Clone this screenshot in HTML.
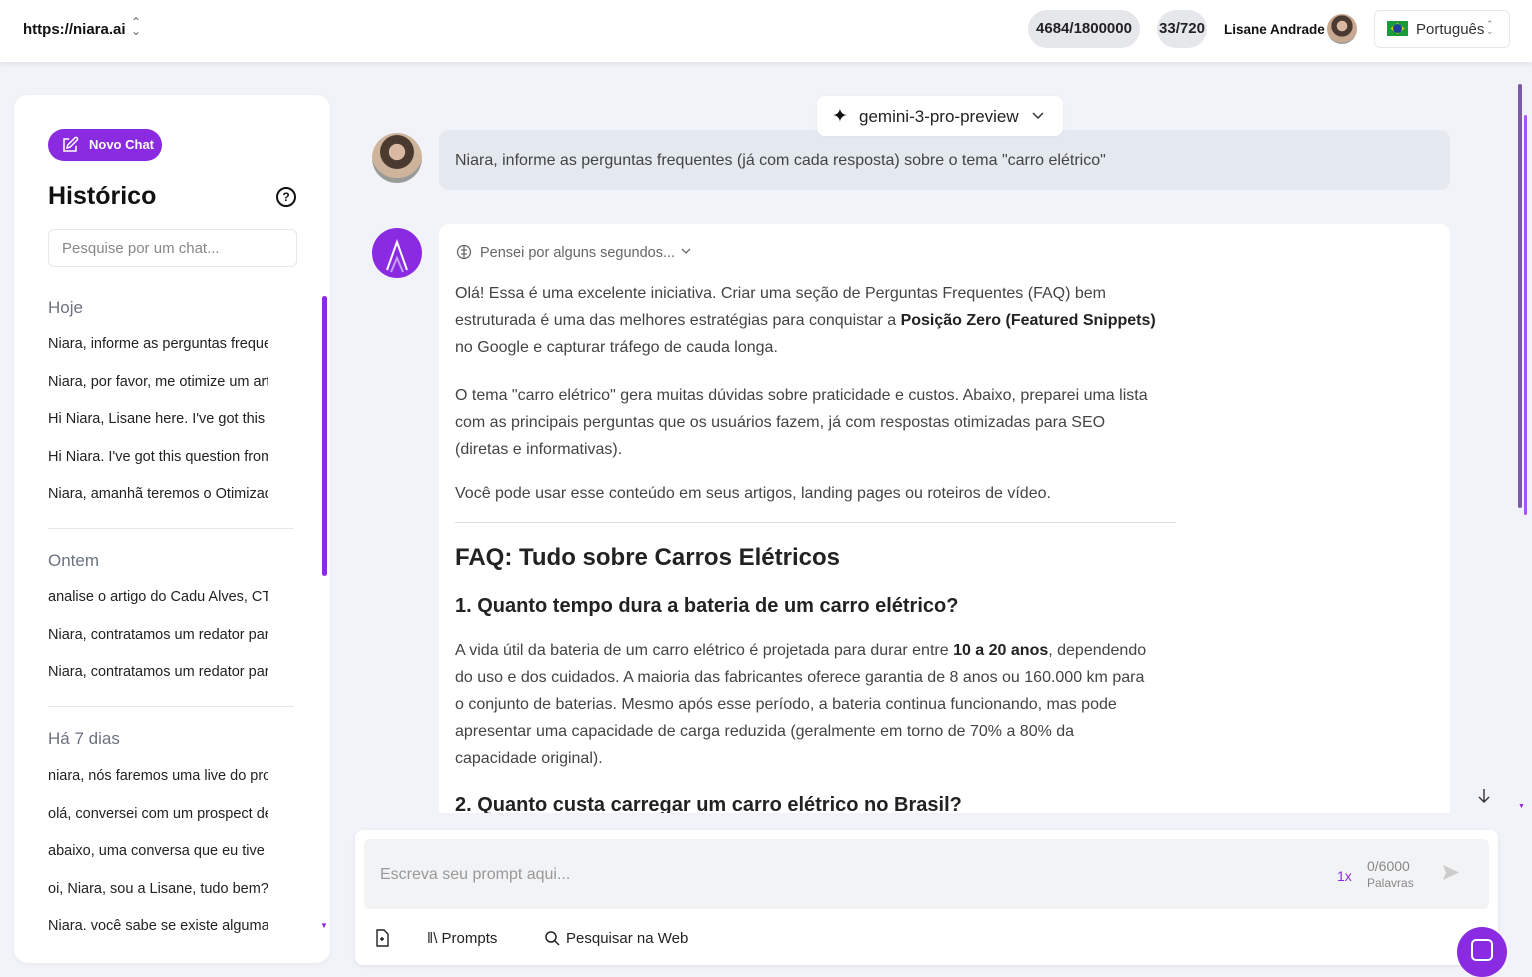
<!DOCTYPE html>
<html><head><meta charset="utf-8"><style>
*{box-sizing:border-box;margin:0;padding:0}
body{width:1532px;height:975px;overflow:hidden;background:#f1f3f8;font-family:"Liberation Sans",sans-serif;color:#111;position:relative}
.hdr{position:absolute;left:0;top:0;width:1532px;height:62px;background:#fff;box-shadow:0 2px 6px rgba(0,0,0,.08);z-index:5}
.abs{position:absolute}
.pill{position:absolute;background:#e5e7eb;border-radius:20px;height:38px;top:10px;font-size:15px;font-weight:bold;line-height:38px;text-align:center;color:#222}
.side{position:absolute;left:14px;top:95px;width:316px;height:868px;background:#fff;border-radius:14px;box-shadow:0 1px 4px rgba(0,0,0,.05);overflow:hidden}
.it{position:absolute;left:34px;width:220px;white-space:nowrap;overflow:hidden;font-size:14.5px;color:#222}
.sh{position:absolute;left:34px;font-size:17px;color:#6b7280}
.dv{position:absolute;left:34px;width:246px;height:1px;background:#e5e7eb}
.t{position:absolute;left:455px;white-space:nowrap;font-size:16px;color:#444}
.t b{color:#222}
</style></head><body>
<div class="hdr">
 <div class="abs" style="left:23px;top:21px;font-size:15px;font-weight:bold">https://niara.ai</div>
 <div class="abs" style="left:131px;top:18px;font-size:12px;color:#666;line-height:9px">&#8963;<br>&#8964;</div>
 <div class="pill" style="left:1028px;width:112px">4684/1800000</div>
 <div class="pill" style="left:1157px;width:50px">33/720</div>
 <div class="abs" style="left:1224px;top:22px;font-size:13.5px;font-weight:bold">Lisane Andrade</div>
 <div class="abs" style="left:1327px;top:14px;width:30px;height:30px;border-radius:50%;background:radial-gradient(circle at 50% 40%,#d8b8a0 0 22%,#4a3a32 23% 45%,#c8a890 46% 70%,#999 71%)"></div>
 <div class="abs" style="left:1374px;top:10px;width:136px;height:38px;border:1px solid #e5e7eb;border-radius:6px;background:#fff"></div>
 <div class="abs" style="left:1387px;top:21px;width:21px;height:15px;background:#1a9a3a"><div style="margin:2px auto;width:14px;height:11px;background:#f5d000;clip-path:polygon(50% 0,100% 50%,50% 100%,0 50%)"></div></div>
 <div class="abs" style="left:1393px;top:24px;width:9px;height:9px;border-radius:50%;background:#1f3f9a"></div>
 <div class="abs" style="left:1416px;top:21px;font-size:15px;color:#333">Português</div>
 <div class="abs" style="left:1486px;top:21px;font-size:9px;color:#888;line-height:7px">&#8963;<br>&#8964;</div>
</div>
<div class="abs" style="left:1518px;top:84px;width:4px;height:424px;background:#7b5aa6;border-radius:2px"></div>
<div class="abs" style="left:1524px;top:115px;width:3px;height:400px;background:#a855f7;border-radius:2px"></div>

<div class="side">
 <div class="abs" style="left:34px;top:34px;width:114px;height:32px;border-radius:16px;background:#8a2be2;color:#fff;font-size:13px;font-weight:bold;line-height:32px;padding-left:41px">Novo Chat</div>
 <svg class="abs" style="left:47px;top:41px" width="18" height="18" viewBox="0 0 24 24" fill="none" stroke="#fff" stroke-width="2"><path d="M11 4H4v16h16v-7"/><path d="M18.5 2.5a2.1 2.1 0 013 3L12 15l-4 1 1-4z"/></svg>
 <div class="abs" style="left:34px;top:87px;font-size:25px;font-weight:bold">Histórico</div>
 <div class="abs" style="left:262px;top:92px;width:20px;height:20px;border:2px solid #111;border-radius:50%;font-size:12px;font-weight:bold;text-align:center;line-height:16px">?</div>
 <div class="abs" style="left:34px;top:134px;width:249px;height:38px;border:1px solid #e5e7eb;border-radius:6px;font-size:15px;color:#888;padding:10px 13px">Pesquise por um chat...</div>
 <div class="sh" style="top:203px">Hoje</div>
 <div class="it" style="top:241px">Niara, informe as perguntas frequentes</div>
 <div class="it" style="top:279px">Niara, por favor, me otimize um artigo</div>
 <div class="it" style="top:316px">Hi Niara, Lisane here. I've got this one</div>
 <div class="it" style="top:354px">Hi Niara. I've got this question from</div>
 <div class="it" style="top:391px">Niara, amanhã teremos o Otimizador</div>
 <div class="dv" style="top:433px"></div>
 <div class="sh" style="top:456px">Ontem</div>
 <div class="it" style="top:494px">analise o artigo do Cadu Alves, CTO</div>
 <div class="it" style="top:532px">Niara, contratamos um redator para</div>
 <div class="it" style="top:569px">Niara, contratamos um redator para</div>
 <div class="dv" style="top:611px"></div>
 <div class="sh" style="top:634px">Há 7 dias</div>
 <div class="it" style="top:673px">niara, nós faremos uma live do projeto</div>
 <div class="it" style="top:711px">olá, conversei com um prospect de</div>
 <div class="it" style="top:748px">abaixo, uma conversa que eu tive com</div>
 <div class="it" style="top:786px">oi, Niara, sou a Lisane, tudo bem?</div>
 <div class="it" style="top:823px">Niara. você sabe se existe alguma</div>
 <div class="abs" style="left:308px;top:201px;width:5px;height:280px;background:#8a2be2;border-radius:3px"></div>
 <div class="abs" style="left:306px;top:826px;font-size:8px;color:#8a2be2">&#9660;</div>
</div>

<div class="abs" style="left:372px;top:133px;width:50px;height:50px;border-radius:50%;background:radial-gradient(circle at 50% 38%,#d9b9a2 0 20%,#4a3a30 21% 42%,#cdb49a 43% 65%,#9a9a98 66%)"></div>
<div class="abs" style="left:439px;top:130px;width:1011px;height:60px;background:#e4e8ef;border-radius:10px;font-size:16px;color:#444;line-height:62px;padding-left:16px">Niara, informe as perguntas frequentes (já com cada resposta) sobre o tema "carro elétrico"</div>

<div class="abs" style="left:817px;top:96px;width:246px;height:40px;background:#fff;border-radius:8px;font-size:17px;color:#222;line-height:41px;padding-left:42px;box-shadow:0 0 2px rgba(0,0,0,.05)">gemini-3-pro-preview</div>
<div class="abs" style="left:832px;top:105px;font-size:19px">&#10022;</div>
<svg class="abs" style="left:1031px;top:111px" width="14" height="10" viewBox="0 0 14 10"><path d="M2 2l5 5 5-5" stroke="#333" stroke-width="1.5" fill="none"/></svg>

<div class="abs" style="left:372px;top:228px;width:50px;height:50px;border-radius:50%;background:#8a2be2"></div>
<svg class="abs" style="left:372px;top:228px" width="50" height="50" viewBox="0 0 50 50"><path d="M15 42L25 14 35 42" stroke="#fff" stroke-width="2" fill="none"/><path d="M19 44L25 30 31 44" stroke="#c4a0f0" stroke-width="2" fill="none"/></svg>

<div class="abs" style="left:439px;top:224px;width:1011px;height:589px;background:#fff;border-radius:10px 10px 0 0"></div>
<svg class="abs" style="left:456px;top:244px" width="16" height="16" viewBox="0 0 16 16" fill="none" stroke="#666" stroke-width="1.3"><circle cx="8" cy="8" r="6.5"/><path d="M8 2v12M5 6h6M5 10h6"/></svg>
<div class="abs" style="left:480px;top:245px;font-size:14.5px;color:#666">Pensei por alguns segundos...</div>
<svg class="abs" style="left:680px;top:247px" width="12" height="8" viewBox="0 0 12 8"><path d="M2 2l4 4 4-4" stroke="#666" stroke-width="1.3" fill="none"/></svg>

<div class="t" style="top:285px">Olá! Essa é uma excelente iniciativa. Criar uma seção de Perguntas Frequentes (FAQ) bem</div>
<div class="t" style="top:312px">estruturada é uma das melhores estratégias para conquistar a <b>Posição Zero (Featured Snippets)</b></div>
<div class="t" style="top:339px">no Google e capturar tráfego de cauda longa.</div>
<div class="t" style="top:387px">O tema "carro elétrico" gera muitas dúvidas sobre praticidade e custos. Abaixo, preparei uma lista</div>
<div class="t" style="top:414px">com as principais perguntas que os usuários fazem, já com respostas otimizadas para SEO</div>
<div class="t" style="top:441px">(diretas e informativas).</div>
<div class="t" style="top:485px">Você pode usar esse conteúdo em seus artigos, landing pages ou roteiros de vídeo.</div>
<div class="abs" style="left:455px;top:522px;width:721px;height:1px;background:#ddd"></div>
<div class="t" style="top:544px;font-size:24px;font-weight:bold;color:#222">FAQ: Tudo sobre Carros Elétricos</div>
<div class="t" style="top:595px;font-size:20px;font-weight:bold;color:#222">1. Quanto tempo dura a bateria de um carro elétrico?</div>
<div class="t" style="top:642px">A vida útil da bateria de um carro elétrico é projetada para durar entre <b>10 a 20 anos</b>, dependendo</div>
<div class="t" style="top:669px">do uso e dos cuidados. A maioria das fabricantes oferece garantia de 8 anos ou 160.000 km para</div>
<div class="t" style="top:696px">o conjunto de baterias. Mesmo após esse período, a bateria continua funcionando, mas pode</div>
<div class="t" style="top:723px">apresentar uma capacidade de carga reduzida (geralmente em torno de 70% a 80% da</div>
<div class="t" style="top:750px">capacidade original).</div>
<div class="abs" style="left:439px;top:790px;width:1011px;height:23px;overflow:hidden"><div style="position:absolute;left:16px;top:4px;white-space:nowrap;font-size:20px;font-weight:bold;color:#222">2. Quanto custa carregar um carro elétrico no Brasil?</div></div>
<svg class="abs" style="left:1477px;top:788px" width="14" height="16" viewBox="0 0 14 16" fill="none" stroke="#333" stroke-width="1.4"><path d="M7 1v13M2 9l5 5 5-5"/></svg>
<div class="abs" style="left:1518px;top:803px;font-size:7px;color:#8a2be2">&#9660;</div>

<div class="abs" style="left:355px;top:830px;width:1143px;height:135px;background:#fff;border-radius:8px;box-shadow:0 1px 4px rgba(0,0,0,.08)"></div>
<div class="abs" style="left:364px;top:839px;width:1125px;height:70px;background:#f2f3f5;border-radius:6px"></div>
<div class="abs" style="left:380px;top:866px;font-size:16px;color:#999">Escreva seu prompt aqui...</div>
<div class="abs" style="left:1337px;top:868px;font-size:14px;color:#8a2be2">1x</div>
<div class="abs" style="left:1367px;top:858px;font-size:14px;color:#888">0/6000</div>
<div class="abs" style="left:1367px;top:876px;font-size:12px;color:#888">Palavras</div>
<svg class="abs" style="left:1442px;top:864px" width="18" height="17" viewBox="0 0 18 17"><path d="M1 1l16 7.5L1 16l3-7.5z" fill="#ccc"/></svg>
<svg class="abs" style="left:374px;top:929px" width="16" height="18" viewBox="0 0 16 18" fill="none" stroke="#222" stroke-width="1.4"><path d="M3 1h7l4 4v12H3z"/><path d="M6 10h4M8 8v4"/></svg>
<div class="abs" style="left:427px;top:930px;font-size:15px;color:#222">&#8214;\ Prompts</div>
<svg class="abs" style="left:545px;top:931px" width="15" height="15" viewBox="0 0 15 15" fill="none" stroke="#222" stroke-width="1.5"><circle cx="6" cy="6" r="5"/><path d="M10 10l4 4"/></svg>
<div class="abs" style="left:566px;top:930px;font-size:15px;color:#222">Pesquisar na Web</div>
<div class="abs" style="left:1457px;top:927px;width:50px;height:50px;border-radius:50%;background:#8a2be2"></div>
<div class="abs" style="left:1471px;top:939px;width:22px;height:22px;border:2px solid #fff;border-radius:5px"></div>
</body></html>
